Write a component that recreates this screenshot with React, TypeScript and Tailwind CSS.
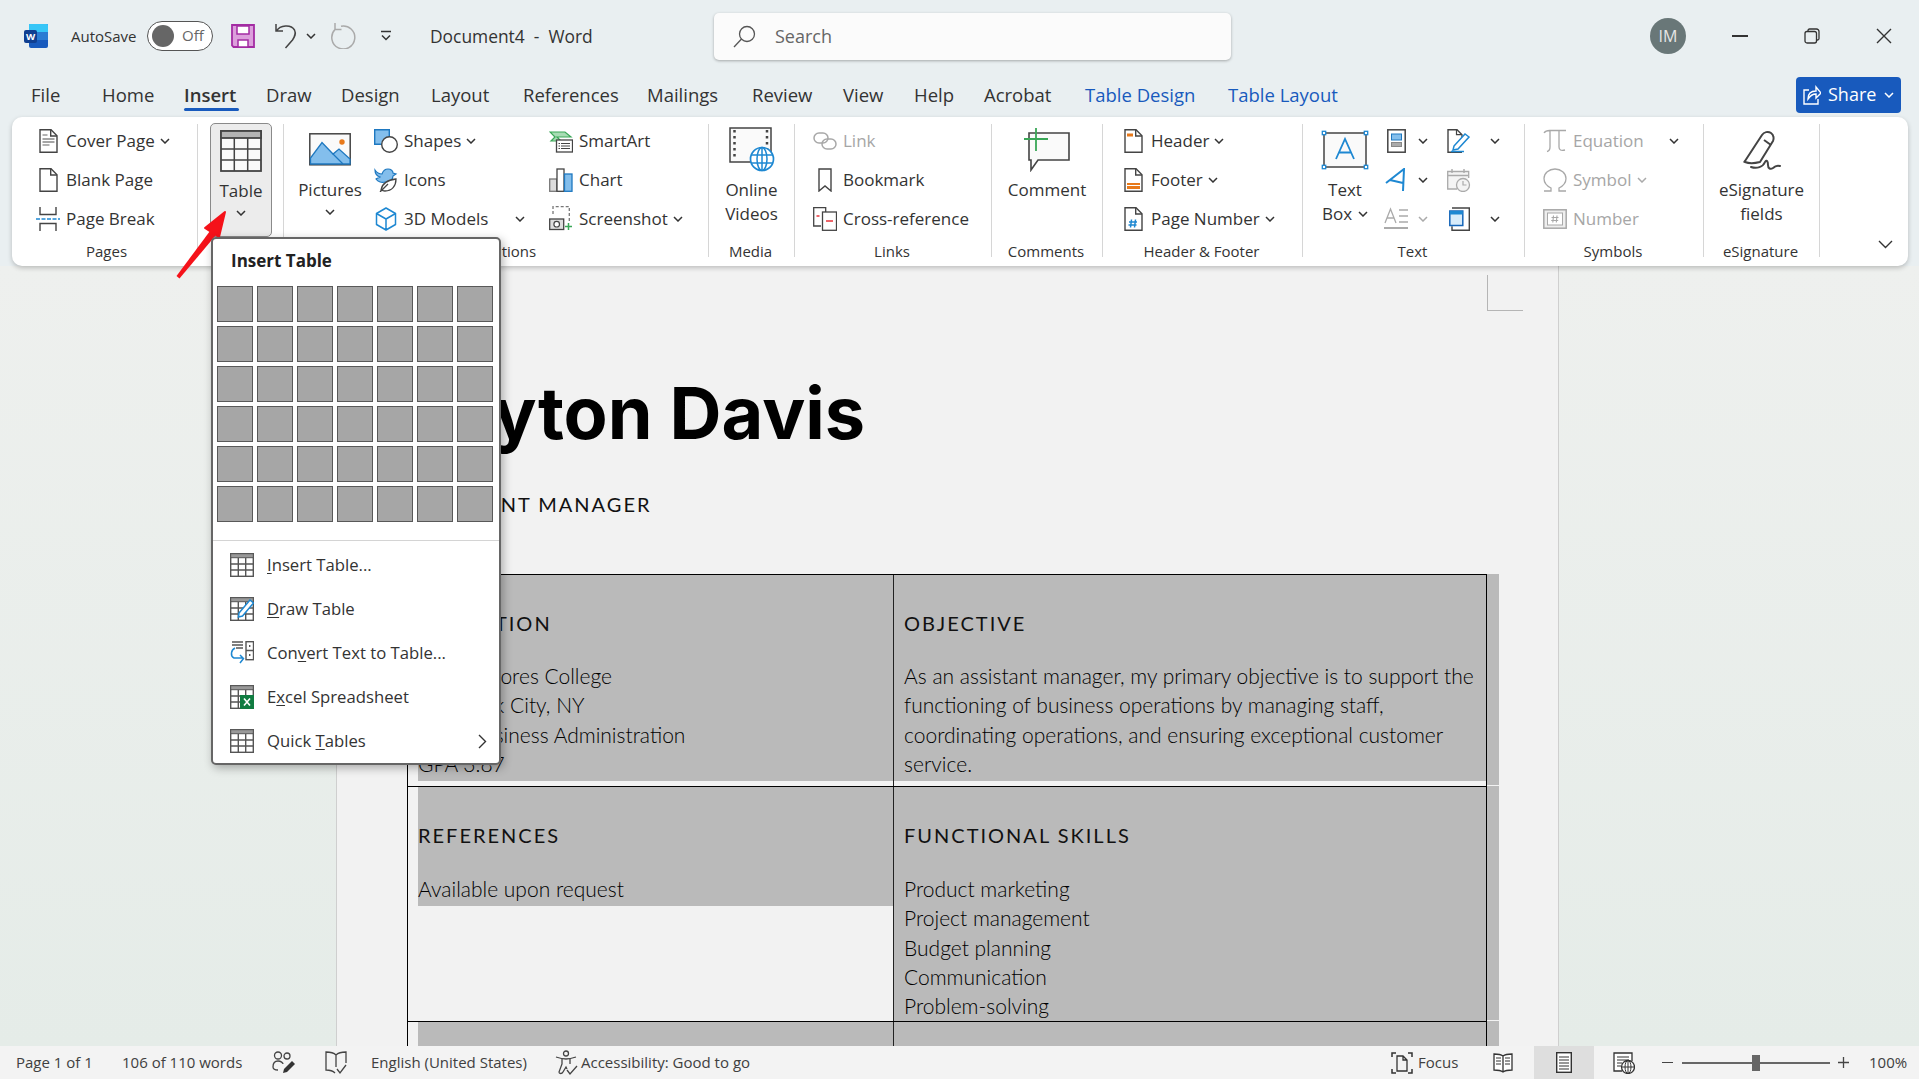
import React from "react";

const Chev = ({ c = "#333", className = "" }: { c?: string; className?: string }) => (
  <svg width="10" height="6" viewBox="0 0 10 6" className={className}>
    <path d="M1 1l4 4 4-4" fill="none" stroke={c} strokeWidth="1.5" />
  </svg>
);

const ic = { d: "#444", b: "#1e88d2", lb: "#83beec", o: "#e8791a", g: "#3aa757", r: "#e8343a", x: "#a8a8a8" };

const DocBase = ({ children }: { children?: React.ReactNode }) => (
  <svg width="19" height="24" viewBox="0 0 19 24">
    <path d="M1 .7h11l6 6v16.600H1z" fill="#fff" stroke={ic.d} strokeWidth="1.400" />
    <path d="M11.700 .7v6.300H18" fill="none" stroke={ic.d} strokeWidth="1.400" />
    {children}
  </svg>
);

const CoverIcon = () => (
  <DocBase>
    <path d="M3.500 10h12M3.500 13h12" stroke="#888" strokeWidth="1.300" />
    <path d="M3.500 16h7" stroke="#888" strokeWidth="1.300" />
    <path d="M3.500 6h5" stroke="#888" strokeWidth="1.300" />
  </DocBase>
);
const PageBreakIcon = () => (
  <svg width="24" height="24" viewBox="0 0 24 24">
    <path d="M4 0v7.500h16V0M4 24v-7.500h16V24" fill="none" stroke={ic.d} strokeWidth="1.400" />
    <path d="M0 12h24" stroke={ic.b} strokeWidth="1.500" strokeDasharray="4 1.500" />
  </svg>
);
const TableIcon = ({ w = 42, h = 42, sw = 1.5 }: { w?: number; h?: number; sw?: number }) => (
  <svg width={w} height={h} viewBox="0 0 42 42">
    <rect x="1" y="1" width="40" height="40" fill="#fafafa" stroke={ic.d} strokeWidth={sw * 1.2} />
    <rect x="1" y="1" width="40" height="7" fill="#b3b3b3" stroke={ic.d} strokeWidth={sw * 1.2} />
    <path d="M14.300 8v33M27.700 8v33M1 19h40M1 30h40" stroke={ic.d} strokeWidth={sw} />
  </svg>
);
const PicturesIcon = () => (
  <svg width="42" height="33" viewBox="0 0 42 33">
    <rect x=".8" y=".8" width="40.400" height="31" fill="#fafafa" stroke={ic.d} strokeWidth="1.500" />
    <path d="M1.500 31V25L13 9.500 24 21l6-5 11 10v5z" fill={ic.lb} stroke="#1e78c0" strokeWidth="1.300" />
    <path d="M24 21l10 10" stroke="#1e78c0" strokeWidth="1.300" />
    <circle cx="33" cy="9" r="2.700" fill={ic.o} />
  </svg>
);
const ShapesIcon = () => (
  <svg width="24" height="24" viewBox="0 0 24 24">
    <path d="M.7 .7h14.600v14.600H.7z" fill={ic.lb} stroke="#1e78c0" strokeWidth="1.400" />
    <circle cx="15.500" cy="15.500" r="7.800" fill="#fff" stroke={ic.d} strokeWidth="1.400" />
  </svg>
);
const IconsIcon = () => (
  <svg width="24" height="24" viewBox="0 0 24 24">
    <path d="M1 2c2 3 5 4 7 4 1-3 3-5 6-5s5 2 5 4l3 1-3 2c0 4-4 7-8 6-3 1-7 0-9-3 1-1 3-1 4-2-3-1-5-4-5-7z" fill={ic.lb} stroke="#1e78c0" strokeWidth="1.200" />
    <path d="M7 22c1-6 6-10 15-11 0 7-4 12-11 12-2 0-3-1-4-1zM6 24l8-8" fill="#fff" stroke={ic.d} strokeWidth="1.300" />
  </svg>
);
const ModelsIcon = () => (
  <svg width="22" height="24" viewBox="0 0 22 24">
    <path d="M11 1l9.500 5.500v11L11 23l-9.500-5.500v-11zM1.500 6.500L11 12l9.500-5.500M11 12v11" fill="#fff" stroke={ic.b} strokeWidth="1.500" strokeLinejoin="round" />
  </svg>
);
const SmartArtIcon = () => (
  <svg width="24" height="24" viewBox="0 0 24 24">
    <path d="M1 3h15l6 5H8l4 4H2l4-4z" fill="#a8dcb4" stroke={ic.g} strokeWidth="1.200" />
    <rect x="7.500" y="11" width="16" height="12" fill="#fff" stroke={ic.d} strokeWidth="1.300" />
    <path d="M12 14.500h9M12 17h9M12 19.500h9M9.500 14.500h1.500M9.500 17h1.500M9.500 19.500h1.500" stroke={ic.d} strokeWidth="1" />
  </svg>
);
const ChartIcon = () => (
  <svg width="24" height="24" viewBox="0 0 24 24">
    <rect x=".7" y="11" width="7" height="12.300" fill="#ddd" stroke="#777" strokeWidth="1.300" />
    <rect x="8" y="1" width="7" height="22.300" fill="#fff" stroke={ic.d} strokeWidth="1.300" />
    <rect x="15.500" y="6" width="7.500" height="17.300" fill={ic.lb} stroke="#1e78c0" strokeWidth="1.300" />
  </svg>
);
const ScreenshotIcon = () => (
  <svg width="24" height="25" viewBox="0 0 24 25">
    <path d="M4 8V.7h16.300V16" fill="none" stroke="#777" strokeWidth="1.300" strokeDasharray="3 2" />
    <rect x=".7" y="13" width="14" height="10.500" fill="#ddd" stroke={ic.d} strokeWidth="1.300" />
    <circle cx="7.700" cy="18.200" r="2.800" fill="#fff" stroke={ic.d} strokeWidth="1.200" />
    <path d="M19.500 17v7M16 20.500h7" stroke={ic.g} strokeWidth="1.500" />
  </svg>
);
const VideoIcon = () => (
  <svg width="46" height="46" viewBox="0 0 46 46">
    <path d="M1 1h41v26H32v8H1z" fill="#fafafa" stroke={ic.d} strokeWidth="1.500" />
    <path d="M5.500 3v30M38 3v22" stroke={ic.d} strokeWidth="2.500" strokeDasharray="2.500 3.500" />
    <circle cx="33" cy="32" r="11.500" fill="#fff" stroke={ic.b} strokeWidth="1.700" />
    <ellipse cx="33" cy="32" rx="5" ry="11.500" fill="none" stroke={ic.b} strokeWidth="1.500" />
    <path d="M22 28h22M22 36h22M33 21v22" stroke={ic.b} strokeWidth="1.500" />
  </svg>
);
const LinkIcon = () => (
  <svg width="24" height="18" viewBox="0 0 24 18">
    <rect x="1" y="1" width="14" height="10" rx="5" fill="none" stroke={ic.x} strokeWidth="1.500" />
    <rect x="9" y="7" width="14" height="10" rx="5" fill="none" stroke={ic.x} strokeWidth="1.500" />
  </svg>
);
const BookmarkIcon = () => (
  <svg width="14" height="24" viewBox="0 0 14 24">
    <path d="M1 1h12v22l-6-5-6 5z" fill="#fff" stroke={ic.d} strokeWidth="1.400" />
  </svg>
);
const CrossRefIcon = () => (
  <svg width="24" height="24" viewBox="0 0 24 24">
    <path d="M8 19H.7V.7h12V5" fill="none" stroke={ic.d} strokeWidth="1.300" />
    <rect x="9.500" y="5" width="14" height="18.300" fill="#fff" stroke={ic.d} strokeWidth="1.300" />
    <path d="M3.500 9h3M13 14h7" stroke={ic.r} strokeWidth="1.500" />
  </svg>
);
const CommentIcon = () => (
  <svg width="46" height="44" viewBox="0 0 46 44">
    <path d="M5 5h40v27H14L7 42V32H5z" fill="#fafafa" stroke={ic.d} strokeWidth="1.600" />
    <path d="M12 0v23M0 11h24" stroke={ic.g} strokeWidth="1.800" />
  </svg>
);
const HeaderIcon = () => (
  <DocBase><rect x="3" y="4.500" width="6" height="3" fill={ic.o} /></DocBase>
);
const FooterIcon = () => (
  <DocBase><rect x="3" y="15" width="13" height="6" fill={ic.o} /><path d="M3 17.500h13" stroke="#fff" /></DocBase>
);
const PageNumIcon = () => (
  <DocBase>
    <path d="M7.500 12.500l-1 8M11.500 12.500l-1 8M5 15h8M4.500 18h8" stroke={ic.b} strokeWidth="1.500" />
  </DocBase>
);
const TextBoxIcon = () => (
  <svg width="48" height="40" viewBox="0 0 48 40">
    <rect x="3" y="3" width="42" height="34" fill="#fafafa" stroke={ic.d} strokeWidth="1.500" />
    <path d="M15 29L24 9l9 20M18 22.500h12" fill="none" stroke={ic.b} strokeWidth="1.800" />
    {[[3, 3], [45, 3], [3, 37], [45, 37]].map(([x, y]) => (
      <rect key={`${x}${y}`} x={x - 1.700} y={y - 1.700} width="3.400" height="3.400" fill="#fff" stroke={ic.b} strokeWidth="1.300" />
    ))}
  </svg>
);
const QuickPartsIcon = () => (
  <svg width="19" height="24" viewBox="0 0 19 24">
    <rect x=".8" y=".8" width="17.400" height="22.400" fill="#fff" stroke={ic.d} strokeWidth="1.500" />
    <rect x="4.500" y="5" width="10" height="6" fill={ic.lb} stroke="#1e78c0" />
    <rect x="4.500" y="13.500" width="10" height="4" fill="#aaa" stroke="#888" />
  </svg>
);
const WordArtIcon = () => (
  <svg width="22" height="24" viewBox="0 0 22 24">
    <path d="M1 15L19 1l-1 22M5 12l13 3" fill="none" stroke={ic.b} strokeWidth="2" />
  </svg>
);
const DropCapIcon = () => (
  <svg width="24" height="24" viewBox="0 0 24 24">
    <path d="M1 16L6.500 2 12 16M3 11h7M15 3h9M15 9h9M15 15h9" fill="none" stroke="#aaa" strokeWidth="1.300" />
    <path d="M0 21h24" stroke="#aaa" strokeWidth="2" />
  </svg>
);
const SignLineIcon = () => (
  <svg width="24" height="24" viewBox="0 0 24 24">
    <path d="M15 23.300H1V.7h9l5 5v3" fill="#fff" stroke={ic.d} strokeWidth="1.400" />
    <path d="M9.500 .7v5h5" fill="none" stroke={ic.d} strokeWidth="1.200" />
    <path d="M7 17L18 5l4 3-11 12-5 1z" fill="#fff" stroke={ic.b} strokeWidth="1.500" />
    <path d="M4 22.500h13" stroke={ic.b} strokeWidth="1.500" />
  </svg>
);
const DateIcon = () => (
  <svg width="24" height="24" viewBox="0 0 24 24">
    <path d="M10 21H.7V3.500h21V10" fill="#f4f4f4" stroke="#aaa" strokeWidth="1.300" />
    <path d="M1 7.500h20M5 1v4M17 1v4" stroke="#aaa" strokeWidth="1.400" />
    <circle cx="16" cy="17" r="6.500" fill="#f4f4f4" stroke="#aaa" strokeWidth="1.300" />
    <path d="M16 13v4h3.500" fill="none" stroke="#aaa" strokeWidth="1.200" />
  </svg>
);
const ObjectIcon = () => (
  <svg width="21" height="24" viewBox="0 0 21 24">
    <path d="M3 1h17.300v22.300H3v-4" fill="#fff" stroke={ic.d} strokeWidth="1.400" />
    <rect x=".8" y="4" width="13" height="14.500" fill="#d8ecfa" stroke="#1565b8" strokeWidth="1.500" />
    <rect x=".8" y="4" width="13" height="3.500" fill="#1e88d2" />
  </svg>
);
const PiIcon = () => (
  <svg width="24" height="24" viewBox="0 0 24 24">
    <path d="M1 4C3 1 5 1.500 8 1.500h15M7 2v16c0 3-1 4-3 4.500M16 2v16c0 3 2 4 6 3" fill="none" stroke="#a8a8a8" strokeWidth="1.300" />
  </svg>
);
const OmegaIcon = () => (
  <svg width="24" height="24" viewBox="0 0 24 24">
    <path d="M1 23h7v-3C4 18 1 15 1 10.500 1 5 6 1 12 1s11 4 11 9.500c0 4.500-3 7.500-7 9.500v3h7" fill="none" stroke="#a8a8a8" strokeWidth="1.300" />
  </svg>
);
const NumberIcon = () => (
  <svg width="24" height="20" viewBox="0 0 24 20">
    <rect x=".8" y=".8" width="22.400" height="18.400" fill="#eee" stroke="#a8a8a8" strokeWidth="1.500" />
    <rect x="4.500" y="4" width="15" height="12" fill="#fff" stroke="#a8a8a8" />
    <path d="M10.500 6.500l-.7 7M14 6.500l-.7 7M8.500 8.500h7M8.200 11.500h7" stroke="#a8a8a8" strokeWidth="1.100" />
  </svg>
);
const ESignIcon = () => (
  <svg width="40" height="44" viewBox="0 0 40 44" className="mt-[4px]">
    <path d="M3 31L20 5c2-3 6-4 9-2 3 2 3 6 2 8L18 32c-4 1-10 2-15 0-1 0-1 0 0-1z" fill="#fff" stroke={ic.d} strokeWidth="2" strokeLinejoin="round" />
    <path d="M22 10l7 5" stroke={ic.d} strokeWidth="2" />
    <path d="M9 37c6 2 12 0 14-5 2-3 3 0 3 3 0 3 2 5 5 3 2-2 4-3 7-2" fill="none" stroke={ic.d} strokeWidth="2" strokeLinecap="round" />
  </svg>
);
const MiniTableIcon = ({ children }: { children?: React.ReactNode }) => (
  <svg width="24" height="24" viewBox="0 0 24 24">
    <rect x=".7" y=".7" width="22.600" height="22.600" fill="#fff" stroke="#555" strokeWidth="1.400" />
    <rect x=".7" y=".7" width="22.600" height="4" fill="#999" stroke="#555" strokeWidth="1" />
    <path d="M8.300 5v18M15.700 5v18M1 11h22M1 17h22" stroke="#555" strokeWidth="1.400" />
    {children}
  </svg>
);

const ribbonTextDisabled = "text-[#a6a6a6]";

const Row = ({ icon, label, chev, disabled, gap = "ml-[6px]", chevGap = "ml-[5px]", slot = "w-[24px]" }: {
  icon: React.ReactNode; label: string; chev?: boolean; disabled?: boolean; gap?: string; chevGap?: string; slot?: string;
}) => (
  <div className={`h-[39px] flex items-center text-[17px] whitespace-nowrap ${disabled ? ribbonTextDisabled : "text-[#333]"}`}>
    <div className={`${slot} flex justify-center shrink-0`}>{icon}</div>
    <span className={gap}>{label}</span>
    {chev && <Chev className={chevGap} c={disabled ? "#aaa" : "#333"} />}
  </div>
);

const Group = ({ label, w, children, labelPad = "pr-[2px]" }: { label: string; w: string; children: React.ReactNode; labelPad?: string }) => (
  <div className={`${w} shrink-0 flex flex-col pt-[4px]`}>
    <div className="h-[118px] flex">{children}</div>
    <div className={`h-[24px] flex items-center justify-center text-[15px] text-[#333] whitespace-nowrap ${labelPad}`}>{label}</div>
  </div>
);

const Divider = () => <div className="w-px h-[133px] mt-[7px] bg-[#d6d6d6] shrink-0" />;

const BigButton = ({ icon, lines, w, chev, className = "" }: {
  icon: React.ReactNode; lines: string[]; w: string; chev?: boolean; className?: string;
}) => (
  <div className={`${w} ${className} flex flex-col items-center text-[17px] text-[#333] shrink-0`}>
    <div className="h-[57px] flex items-center justify-center">{icon}</div>
    {lines.map((l) => (
      <div key={l} className="h-[24px] leading-[24px] whitespace-nowrap">{l}</div>
    ))}
    {chev && <Chev className="mt-[7px]" />}
  </div>
);

const tabs = [
  { t: "File", c: "w-[71px]" }, { t: "Home", c: "w-[82px]" }, { t: "Insert", c: "w-[82px]" }, { t: "Draw", c: "w-[75px]" },
  { t: "Design", c: "w-[90px]" }, { t: "Layout", c: "w-[92px]" }, { t: "References", c: "w-[124px]" }, { t: "Mailings", c: "w-[105px]" },
  { t: "Review", c: "w-[91px]" }, { t: "View", c: "w-[71px]" }, { t: "Help", c: "w-[70px]" }, { t: "Acrobat", c: "w-[101px]" },
  { t: "Table Design", c: "w-[143px]" }, { t: "Table Layout", c: "w-[120px]" },
];

const statusText = "text-[15px] text-[#404040] whitespace-nowrap";

const bodyText = "text-[21px] font-light leading-[29.300px] text-black font-['Lato',sans-serif]";
const headText = "text-[20px] leading-[29px] tracking-[2px] text-[#111] font-['Lato',sans-serif]";

export default function App() {
  return (
    <div className="relative w-[1919px] h-[1079px] overflow-hidden flex flex-col bg-[#e9eff1] font-['Open_Sans',sans-serif]">
      {/* title bar */}
      <div className="h-[72px] flex items-center shrink-0 text-[#333]">
        <svg width="24" height="24" viewBox="0 0 24 24" className="ml-[24px]">
          <path d="M5 0h19v8H5z" fill="#41a5ee" />
          <path d="M5 0h17a2 2 0 012 2v6H5z" fill="#37c6f7" />
          <path d="M5 8h19v8H5z" fill="#2b7cd3" />
          <path d="M5 16h19v6a2 2 0 01-2 2H7a2 2 0 01-2-2z" fill="#185abd" />
          <rect x="0" y="6" width="13" height="13" rx="2" fill="#103f91" />
          <text x="6.500" y="16" textAnchor="middle" fontSize="9.500" fontWeight="700" fill="#fff" fontFamily="Open Sans, sans-serif">W</text>
        </svg>
        <span className="ml-[23px] w-[76px] text-[15px] whitespace-nowrap">AutoSave</span>
        <div className="w-[66px] h-[30px] rounded-full border border-[#555] bg-white flex items-center pl-[4px] mt-[-1px]">
          <div className="w-[22px] h-[22px] rounded-full bg-[#666]" />
          <span className="ml-[8px] text-[15px] text-[#666]">Off</span>
        </div>
        <svg width="24" height="24" viewBox="0 0 24 24" className="ml-[18px]">
          <path d="M1 1h22v22H2.500L1 21.500z" fill="#dc9fdc" stroke="#a32ca3" strokeWidth="1.800" />
          <rect x="6" y="2" width="12" height="8" fill="#fff" stroke="#a32ca3" strokeWidth="1.500" />
          <rect x="7" y="16" width="10" height="7" fill="#fff" stroke="#a32ca3" strokeWidth="1.500" />
        </svg>
        <svg width="22" height="26" viewBox="0 0 22 26" className="ml-[20px]">
          <path d="M1 1v7h7M1.500 8C5 2 16 1 19.500 7c2 4 0 7-2 10l-7 8" fill="none" stroke="#444" strokeWidth="1.500" />
        </svg>
        <Chev className="ml-[9px]" />
        <svg width="26" height="26" viewBox="0 0 26 26" className="ml-[14px]">
          <path d="M5 0v6.500h6.500M5 6.500A11.500 11.500 0 1 0 11 3.200" fill="none" stroke="#aaa" strokeWidth="1.500" />
        </svg>
        <svg width="12" height="12" viewBox="0 0 12 12" className="ml-[24px]">
          <path d="M1 1.500h10M2 5.500l4 4 4-4" fill="none" stroke="#333" strokeWidth="1.500" />
        </svg>
        <span className="ml-[38px] w-[284px] text-[17.400px] whitespace-pre">Document4  -  Word</span>
        <div className="w-[517px] h-[47px] rounded-[5px] bg-[#fbfbfb] shadow-[0_1px_3px_rgba(0,0,0,0.3)] flex items-center pl-[19px]">
          <svg width="23" height="23" viewBox="0 0 23 23">
            <circle cx="14" cy="9" r="7.500" fill="none" stroke="#555" strokeWidth="1.300" />
            <path d="M8.500 14L1 22" stroke="#555" strokeWidth="1.300" />
          </svg>
          <span className="ml-[19px] text-[18px] text-[#666]">Search</span>
        </div>
        <div className="ml-[419px] w-[36px] h-[36px] rounded-full bg-[#697778] flex items-center justify-center text-[16px] text-[#e6e6e6]">IM</div>
        <div className="ml-[46px] w-[16px] h-[1.500px] bg-[#333]" />
        <svg width="16" height="16" viewBox="0 0 16 16" className="ml-[56px]">
          <path d="M4 3V2.500A1.500 1.500 0 015.500 1h7A2.500 2.500 0 0115 3.500v7a1.500 1.500 0 01-1.500 1.500H13" fill="none" stroke="#333" strokeWidth="1.300" />
          <rect x="1" y="3.500" width="11.500" height="11.500" rx="2" fill="none" stroke="#333" strokeWidth="1.300" />
        </svg>
        <svg width="16" height="16" viewBox="0 0 16 16" className="ml-[56px]">
          <path d="M1 1l14 14M15 1L1 15" stroke="#333" strokeWidth="1.400" />
        </svg>
      </div>

      {/* tabs */}
      <div className="h-[45px] flex items-center shrink-0 pl-[31px] text-[18.500px]">
        {tabs.map(({ t, c }) => (
          <div key={t} className={`${c} relative h-[45px] leading-[46px] whitespace-nowrap ${t.startsWith("Table") ? "text-[#185abd]" : "text-[#333]"} ${t === "Insert" ? "font-semibold" : ""}`}>
            {t}
            {t === "Insert" && <div className="absolute left-0 bottom-[6px] w-[55px] h-[3px] rounded-full bg-[#185abd]" />}
          </div>
        ))}
        <div className="ml-[448px] w-[105px] h-[36px] rounded-[4px] bg-[#185abd] flex items-center pl-[7px] text-white text-[18px] shrink-0">
          <svg width="18" height="20" viewBox="0 0 18 20">
            <path d="M6 5H1v14h14v-5M5 14c0-5 3-8 8-8V2l5 6-5 5V9c-4 0-6 2-8 5z" fill="none" stroke="#fff" strokeWidth="1.400" />
          </svg>
          <span className="ml-[7px]">Share</span>
          <Chev c="#fff" className="ml-[8px]" />
        </div>
      </div>

      {/* ribbon */}
      <div className="relative z-10 ml-[12px] w-[1896px] h-[149px] shrink-0 bg-white rounded-[10px] shadow-[0_2px_5px_rgba(0,0,0,0.22)] flex">
        <Group label="Pages" w="w-[185px]" labelPad="pl-[4px]">
          <div className="pl-[24px]">
            <Row icon={<CoverIcon />} label="Cover Page" chev />
            <Row icon={<DocBase />} label="Blank Page" />
            <Row icon={<PageBreakIcon />} label="Page Break" />
          </div>
        </Group>
        <Divider />
        <Group label="Tables" w="w-[85px]">
          <div className="ml-[12px] mt-[2px] w-[62px] h-[114px] rounded-[5px] bg-[#ececec] border border-[#8a8a8a] flex flex-col items-center text-[17px] text-[#333]">
            <div className="mt-[6px]"><TableIcon /></div>
            <div className="mt-[7px] h-[24px] leading-[24px]">Table</div>
            <Chev className="mt-[7px]" />
          </div>
        </Group>
        <Divider />
        <Group label="Illustrations" w="w-[424px]">
          <BigButton icon={<PicturesIcon />} lines={["Pictures"]} w="w-[88px]" chev className="ml-[2px]" />
          <div className="w-[175px] shrink-0">
            <Row icon={<ShapesIcon />} label="Shapes" chev />
            <Row icon={<IconsIcon />} label="Icons" />
            <div className="flex items-center">
              <Row icon={<ModelsIcon />} label="3D Models" />
              <Chev className="ml-[27px]" />
            </div>
          </div>
          <div>
            <Row icon={<SmartArtIcon />} label="SmartArt" />
            <Row icon={<ChartIcon />} label="Chart" />
            <Row icon={<ScreenshotIcon />} label="Screenshot" chev />
          </div>
        </Group>
        <Divider />
        <Group label="Media" w="w-[85px]">
          <BigButton icon={<VideoIcon />} lines={["Online", "Videos"]} w="w-[85px]" />
        </Group>
        <Divider />
        <Group label="Links" w="w-[196px]">
          <div className="pl-[18px]">
            <Row icon={<LinkIcon />} label="Link" disabled />
            <Row icon={<BookmarkIcon />} label="Bookmark" />
            <Row icon={<CrossRefIcon />} label="Cross-reference" />
          </div>
        </Group>
        <Divider />
        <Group label="Comments" w="w-[110px]">
          <BigButton icon={<CommentIcon />} lines={["Comment"]} w="w-[110px]" />
        </Group>
        <Divider />
        <Group label="Header & Footer" w="w-[199px]">
          <div className="pl-[21px]">
            <Row icon={<HeaderIcon />} label="Header" chev slot="w-[19px]" gap="ml-[8px]" />
            <Row icon={<FooterIcon />} label="Footer" chev slot="w-[19px]" gap="ml-[8px]" />
            <Row icon={<PageNumIcon />} label="Page Number" chev slot="w-[19px]" gap="ml-[8px]" />
          </div>
        </Group>
        <Divider />
        <Group label="Text" w="w-[221px]">
          <div className="ml-[18px] w-[48px] shrink-0 flex flex-col items-center text-[17px] text-[#333]">
            <div className="h-[57px] flex items-center"><TextBoxIcon /></div>
            <div className="h-[24px] leading-[24px]">Text</div>
            <div className="h-[24px] leading-[24px] flex items-center whitespace-nowrap">Box<Chev className="ml-[6px]" /></div>
          </div>
          <div className="ml-[15px] w-[63px] shrink-0">
            <div className="h-[39px] flex items-center"><div className="w-[24px] flex justify-center"><QuickPartsIcon /></div><Chev className="ml-[10px]" /></div>
            <div className="h-[39px] flex items-center"><div className="w-[24px] flex justify-center"><WordArtIcon /></div><Chev className="ml-[10px]" /></div>
            <div className="h-[39px] flex items-center"><div className="w-[24px] flex justify-center"><DropCapIcon /></div><Chev c="#aaa" className="ml-[10px]" /></div>
          </div>
          <div className="shrink-0">
            <div className="h-[39px] flex items-center"><div className="w-[24px] flex justify-center"><SignLineIcon /></div><Chev className="ml-[19px]" /></div>
            <div className="h-[39px] flex items-center"><div className="w-[24px] flex justify-center"><DateIcon /></div></div>
            <div className="h-[39px] flex items-center"><div className="w-[24px] flex justify-center"><ObjectIcon /></div><Chev className="ml-[19px]" /></div>
          </div>
        </Group>
        <Divider />
        <Group label="Symbols" w="w-[178px]">
          <div className="pl-[18px]">
            <div className="flex items-center">
              <Row icon={<PiIcon />} label="Equation" disabled />
              <Chev className="ml-[25px]" />
            </div>
            <Row icon={<OmegaIcon />} label="Symbol" chev disabled />
            <Row icon={<NumberIcon />} label="Number" disabled />
          </div>
        </Group>
        <Divider />
        <Group label="eSignature" w="w-[115px]">
          <BigButton icon={<ESignIcon />} lines={["eSignature", "fields"]} w="w-[115px]" />
        </Group>
        <Divider />
        <div className="flex-1 flex items-end justify-end pr-[15px] pb-[17px]">
          <svg width="15" height="9" viewBox="0 0 15 9">
            <path d="M1 1l6.500 6.500L14 1" fill="none" stroke="#333" strokeWidth="1.400" />
          </svg>
        </div>
      </div>

      {/* document area */}
      <div className="flex-1 min-h-0 flex overflow-hidden bg-[linear-gradient(180deg,#eef0ee_0%,#e5ece8_100%)]">
        <div className="ml-[336px] w-[1223px] shrink-0 bg-[#f2f2f2] border-x border-[#cfcfcf] flex flex-col">
          <div className="ml-[1150px] mt-[9px] w-[36px] h-[36px] shrink-0 border-l border-b border-[#b5b5b5]" />
          <div className="ml-[43px] mt-[66px] text-[72px] leading-[72px] font-bold text-black font-['Inter',sans-serif] whitespace-nowrap">Clayton Davis</div>
          <div className="ml-[74px] mt-[43px] text-[20px] leading-[24px] tracking-[2px] text-[#111] font-['Lato',sans-serif] whitespace-nowrap">ASSISTANT MANAGER</div>
          <div className="ml-[70px] mt-[58px] flex shrink-0">
            <div className="w-[1080px] shrink-0 border-t border-l border-r border-black flex flex-col">
              <div className="flex h-[211px] shrink-0">
                <div className="w-[486px] h-full shrink-0 border-r border-[#222] pl-[10px]">
                  <div className="h-[206px] bg-[#bababa] pt-[34px]">
                    <div className={`${headText} mb-[23px]`}>EDUCATION</div>
                    <div className={bodyText}>Saint Dolores College</div>
                    <div className={bodyText}>New York City, NY</div>
                    <div className={bodyText}>BS in Business Administration</div>
                    <div className={bodyText}>GPA 3.87</div>
                  </div>
                </div>
                <div className="flex-1 h-[206px] bg-[#bababa] pt-[34px] pl-[10px]">
                  <div className={`${headText} mb-[23px]`}>OBJECTIVE</div>
                  <div className={`${bodyText} w-[575px]`}>As an assistant manager, my primary objective is to support the functioning of business operations by managing staff, coordinating operations, and ensuring exceptional customer service.</div>
                </div>
              </div>
              <div className="flex h-[235px] shrink-0 border-t border-black">
                <div className="w-[486px] h-full shrink-0 border-r border-[#222] pl-[10px]">
                  <div className="h-[119px] bg-[#bababa] pt-[34px]">
                    <div className={`${headText} mb-[24px]`}>REFERENCES</div>
                    <div className={bodyText}>Available upon request</div>
                  </div>
                </div>
                <div className="flex-1 bg-[#bababa] pt-[34px] pl-[10px]">
                  <div className={`${headText} mb-[24px]`}>FUNCTIONAL SKILLS</div>
                  <div className={bodyText}>Product marketing</div>
                  <div className={bodyText}>Project management</div>
                  <div className={bodyText}>Budget planning</div>
                  <div className={bodyText}>Communication</div>
                  <div className={bodyText}>Problem-solving</div>
                </div>
              </div>
              <div className="flex h-[30px] shrink-0 border-t border-black">
                <div className="w-[486px] shrink-0 border-r border-[#222] pl-[10px]"><div className="h-full bg-[#bababa]" /></div>
                <div className="flex-1 bg-[#bababa]" />
              </div>
            </div>
            <div className="w-[12px] shrink-0 flex flex-col">
              <div className="h-[211px] bg-[#bababa]" />
              <div className="h-px bg-[#f2f2f2]" />
              <div className="h-[234px] bg-[#bababa]" />
              <div className="h-px bg-[#f2f2f2]" />
              <div className="h-[30px] bg-[#bababa]" />
            </div>
          </div>
        </div>
      </div>

      {/* status bar */}
      <div className="h-[33px] shrink-0 bg-[#f3f3f3] flex items-center">
        <span className={`${statusText} ml-[16px] w-[106px]`}>Page 1 of 1</span>
        <span className={`${statusText} w-[150px]`}>106 of 110 words</span>
        <svg width="24" height="24" viewBox="0 0 24 24">
          <circle cx="6" cy="4.500" r="3.500" fill="none" stroke="#444" strokeWidth="1.300" />
          <circle cx="15" cy="5" r="3" fill="none" stroke="#444" strokeWidth="1.300" />
          <path d="M1 16c0-4 2-6 5-6s5 2 5 3M1 16c0 2 2 3 5 3" fill="none" stroke="#444" strokeWidth="1.300" />
          <path d="M11 22l1-4 8-8 3 3-8 8z" fill="#333" />
        </svg>
        <svg width="22" height="24" viewBox="0 0 22 24" className="ml-[29px]">
          <path d="M11 4C9 2 5 1 1 1v18c4 0 7 1 9 3M11 4c2-2 6-3 10-3v11M11 4v12" fill="none" stroke="#444" strokeWidth="1.300" />
          <path d="M12 18l3 4 6-8" fill="none" stroke="#444" strokeWidth="1.300" />
        </svg>
        <span className={`${statusText} ml-[24px] w-[184px]`}>English (United States)</span>
        <svg width="24" height="26" viewBox="0 0 24 26">
          <circle cx="11" cy="3.500" r="2.500" fill="none" stroke="#444" strokeWidth="1.300" />
          <path d="M1 7c3 1 6 2 10 2s7-1 10-2M7 9v5l-3 8c0 2 3 2 4 0l3-5 1 2M15 9v5" fill="none" stroke="#444" strokeWidth="1.300" />
          <path d="M12 20l3 4 7-8" fill="none" stroke="#444" strokeWidth="1.300" />
        </svg>
        <span className={`${statusText} ml-[2px] w-[810px]`}>Accessibility: Good to go</span>
        <svg width="22" height="22" viewBox="0 0 22 22">
          <path d="M1 5V1h4M17 1h4v4M1 17v4h4M21 17v4h-4" fill="none" stroke="#333" strokeWidth="1.500" />
          <path d="M6 4h6l4 4v11H6zM12 4v4h4" fill="none" stroke="#333" strokeWidth="1.300" />
        </svg>
        <span className={`${statusText} ml-[5px] w-[75px]`}>Focus</span>
        <svg width="20" height="20" viewBox="0 0 20 20">
          <path d="M10 3C8 1.500 4 1 1 1v16c3 0 7 .5 9 2 2-1.500 6-2 9-2V1c-3 0-7 .5-9 2zM10 3v16" fill="#fff" stroke="#333" strokeWidth="1.300" />
          <path d="M3 5h5M3 8h5M3 11h5M12 5h5M12 8h5M12 11h5" stroke="#333" />
        </svg>
        <div className="ml-[21px] w-[60px] h-[33px] bg-[#dedede] flex items-center justify-center">
          <svg width="16" height="21" viewBox="0 0 16 21">
            <rect x=".7" y=".7" width="14.600" height="19.600" fill="#fff" stroke="#333" strokeWidth="1.400" />
            <path d="M3 5h10M3 8h10M3 11h10M3 14h10M3 17h10" stroke="#333" strokeWidth="1.200" />
          </svg>
        </div>
        <svg width="22" height="22" viewBox="0 0 22 22" className="ml-[19px]">
          <path d="M9 19H1V1h18v8" fill="#fff" stroke="#333" strokeWidth="1.300" />
          <path d="M4 5h12M4 8h12M4 11h5M4 14h4" stroke="#333" strokeWidth="1.200" />
          <circle cx="15" cy="15" r="6.500" fill="#fff" stroke="#333" strokeWidth="1.300" />
          <path d="M9 15h12M15 9v12" stroke="#333" />
          <ellipse cx="15" cy="15" rx="3" ry="6.500" fill="none" stroke="#333" />
        </svg>
        <div className="ml-[27px] w-[11px] h-[1.500px] bg-[#444]" />
        <div className="ml-[9px] w-[148px] h-[16px] flex items-center">
          <div className="w-[70px] h-[2px] bg-[#666]" />
          <div className="w-[8px] h-[16px] bg-[#666]" />
          <div className="w-[70px] h-[2px] bg-[#666]" />
        </div>
        <svg width="11" height="11" viewBox="0 0 11 11" className="ml-[8px]">
          <path d="M0 5.500h11M5.500 0v11" stroke="#444" strokeWidth="1.300" />
        </svg>
        <span className={`${statusText} ml-[20px]`}>100%</span>
      </div>

      {/* red annotation arrow */}
      <svg width="60" height="78" viewBox="0 0 60 78" className="absolute left-[172px] top-[206px] z-20">
        <path d="M4.500 70L7.500 72.500 44 29 38 25z" fill="#f5121a" />
        <path d="M53 6L33 22l14 9z" fill="#f5121a" stroke="#f5121a" strokeWidth="2" strokeLinejoin="round" />
      </svg>

      {/* insert table dropdown */}
      <div className="absolute z-30 left-[211px] top-[237px] w-[290px] h-[528px] rounded-[5px] border-2 border-[#666] bg-white shadow-[2px_3px_10px_rgba(0,0,0,0.3)] flex flex-col">
        <div className="h-[47px] pl-[18px] leading-[44px] text-[17px] font-bold text-[#222]">Insert Table</div>
        <div className="ml-[4px] grid grid-cols-[repeat(7,36px)] gap-[4px]">
          {Array.from({ length: 42 }, (_, i) => (
            <div key={i} className="h-[36px] bg-[#a6a6a6] border border-[#595959]" />
          ))}
        </div>
        <div className="mt-[18px] h-px bg-[#d4d4d4]" />
        <div className="flex flex-col pt-[2px]">
          {[
            { pre: "", u: "I", post: "nsert Table...", icon: <MiniTableIcon /> },
            { pre: "", u: "D", post: "raw Table", icon: (
              <MiniTableIcon>
                <path d="M9 16L20 3l3.500 3-11 13-4 1z" fill="#fff" stroke={ic.b} strokeWidth="1.500" />
              </MiniTableIcon>
            ) },
            { pre: "Con", u: "v", post: "ert Text to Table...", icon: (
              <svg width="24" height="24" viewBox="0 0 24 24">
                <path d="M2 1h11M2 4h11M6 7h7" stroke="#555" strokeWidth="1.300" />
                <rect x="16" y=".7" width="7.500" height="18" fill="#fff" stroke="#555" strokeWidth="1.400" />
                <path d="M16 9.500h7.500M19.700 4v2M19.700 13v2" stroke="#555" strokeWidth="1.400" />
                <path d="M5 7C1 9 0 15 4 17h9M10 14l3.500 3.500L10 22" fill="none" stroke={ic.b} strokeWidth="1.500" />
              </svg>
            ) },
            { pre: "E", u: "x", post: "cel Spreadsheet", icon: (
              <MiniTableIcon>
                <rect x="10" y="10" width="14" height="14" fill="#107c41" />
                <path d="M14 13.500l6 7M20 13.500l-6 7" stroke="#fff" strokeWidth="1.600" />
              </MiniTableIcon>
            ) },
            { pre: "Quick ", u: "T", post: "ables", icon: <MiniTableIcon />, arrow: true },
          ].map((m) => (
            <div key={m.post} className="h-[44px] flex items-center pl-[17px] text-[16.700px] text-[#333] whitespace-pre">
              <div className="w-[24px] h-[24px] shrink-0">{m.icon}</div>
              <span className="ml-[13px]">{m.pre}<span className="underline underline-offset-2">{m.u}</span>{m.post}</span>
              {m.arrow && (
                <svg width="9" height="15" viewBox="0 0 9 15" className="ml-auto mr-[12px]">
                  <path d="M1 1l6.500 6.500L1 14" fill="none" stroke="#333" strokeWidth="1.400" />
                </svg>
              )}
            </div>
          ))}
        </div>
      </div>
    </div>
  );
}
